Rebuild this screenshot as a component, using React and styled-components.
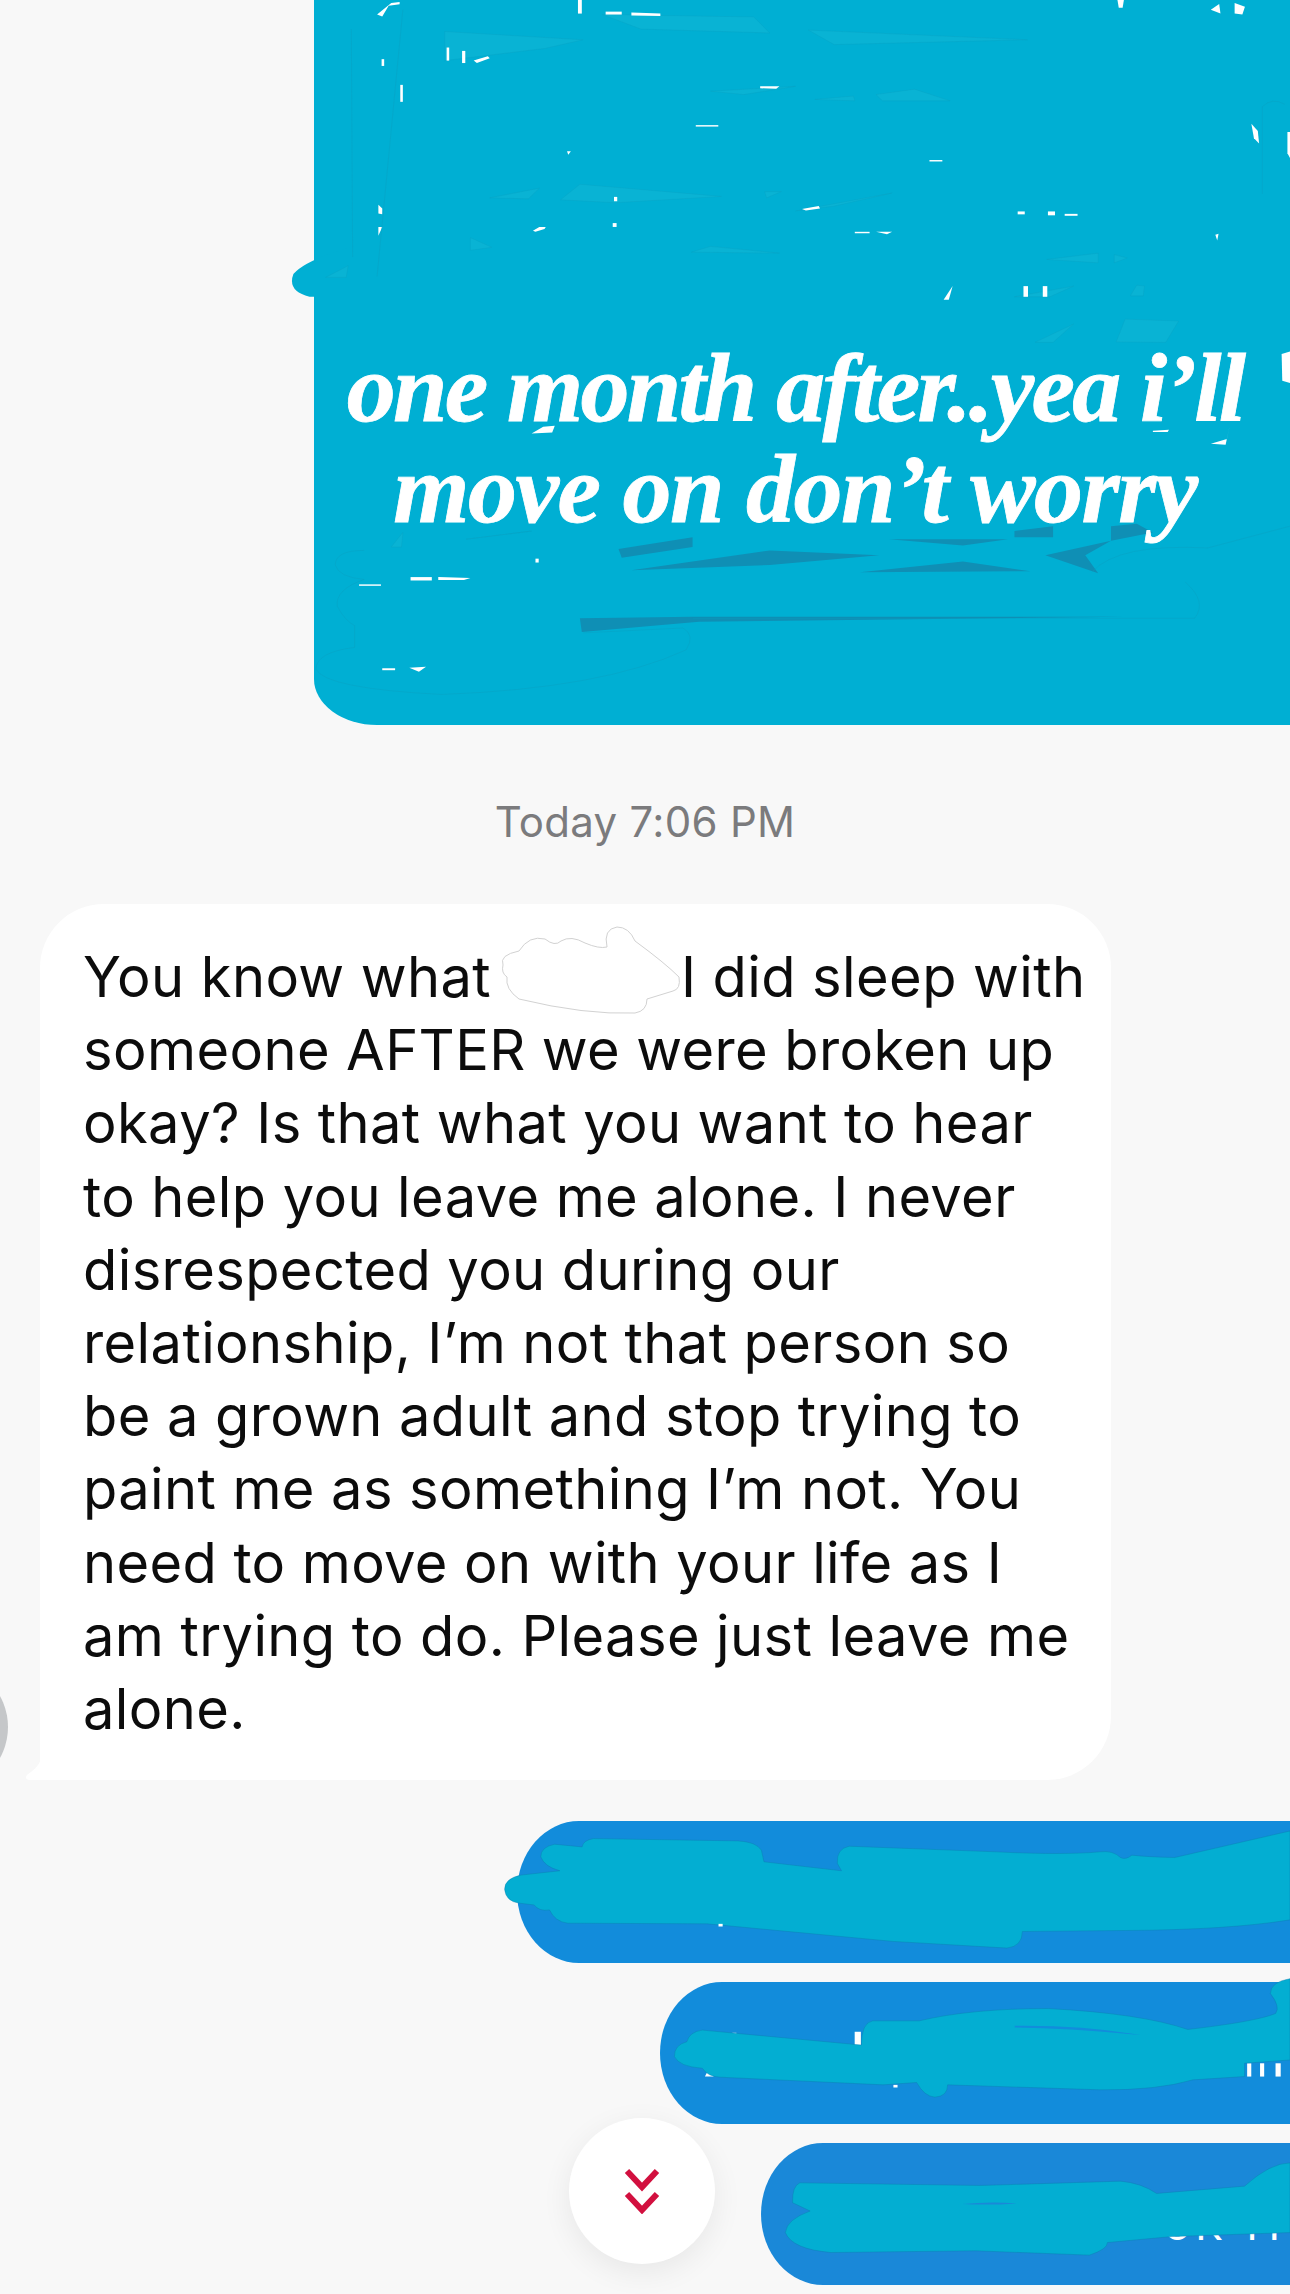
import styled, { createGlobalStyle } from "styled-components";

const GlobalStyle = createGlobalStyle`
  html, body {
    margin: 0;
    padding: 0;
    background: #f8f8f8;
  }
`;

const Page = styled.div`
  position: relative;
  width: 1290px;
  height: 2294px;
  overflow: hidden;
  background: #f8f8f8;
  font-family: Inter, "Liberation Sans", Arial, sans-serif;
`;

const SentCard = styled.div`
  position: relative;
  box-sizing: border-box;
  height: 725px;
  margin-left: 314px;
  padding: 338px 14px 0 0;
  background: #00afd3;
  border-bottom-left-radius: 63px 46px;
  text-align: center;
`;

const Scribble = styled.svg`
  position: absolute;
  left: 0;
  top: 0;
  width: 100%;
  height: 100%;
  overflow: visible;
`;

const CaptionLine = styled.div`
  position: relative;
  font-family: "Liberation Serif", "Times New Roman", serif;
  font-style: italic;
  font-weight: 700;
  font-size: 98px;
  line-height: 101px;
  letter-spacing: ${(p) => p.$spacing}px;
  -webkit-text-stroke: 0.8px #fff;
  color: #fff;
  white-space: nowrap;
`;

const Stamp = styled.div`
  margin-top: 72px;
  font-size: 42px;
  line-height: 50px;
  letter-spacing: 0.3px;
  text-align: center;
  color: #7b7b7d;
`;

const ReceivedRow = styled.div`
  position: relative;
  margin: 57px 0 41px 40px;
  width: 1071px;
`;

const Avatar = styled.div`
  position: absolute;
  left: -160px;
  bottom: -11px;
  width: 128px;
  height: 128px;
  border-radius: 50%;
  background: #c5c7c9;
`;

const Bubble = styled.div`
  position: relative;
  box-sizing: border-box;
  height: 876px;
  padding: 37px 0 0 43px;
  background: #fff;
  border-radius: 64px 64px 64px 0;
  color: #0c0c0c;
  font-size: 56px;
  line-height: 73.2px;
  letter-spacing: 0.4px;

  &::after {
    content: "";
    position: absolute;
    left: -15px;
    bottom: 0;
    width: 16px;
    height: 22px;
    background: #fff;
    clip-path: path("M16 0 C14 9 7 13 2 17 Q-1 21 4 22 L16 22 Z");
  }
`;

const Line = styled.div`
  white-space: nowrap;
`;

const NameGap = styled.span`
  position: relative;
  display: inline-block;
  width: 190px;
  height: 10px;

  svg {
    position: absolute;
    left: 4px;
    top: -60px;
    width: 186px;
    height: 88px;
    overflow: visible;
  }
`;

const SentStack = styled.div`
  display: flex;
  flex-direction: column;
  gap: 19px;
`;

const SentPill = styled.div`
  position: relative;
  box-sizing: border-box;
  height: 142px;
  margin-left: ${(p) => p.$left}px;
  background: ${(p) => p.$color};
  border-radius: 62px 0 0 62px / 71px 0 0 71px;
`;

const Peek = styled.span`
  position: absolute;
  right: 6px;
  bottom: 38px;
  color: #fff;
  font-family: Roboto, sans-serif;
  font-size: 42px;
  line-height: 1;
  letter-spacing: 4px;
  white-space: nowrap;
`;

const JumpButton = styled.div`
  position: absolute;
  left: 569px;
  top: 2118px;
  width: 146px;
  height: 146px;
  display: flex;
  align-items: center;
  justify-content: center;
  background: #fff;
  border-radius: 50%;
  box-shadow: 0 8px 30px rgba(0, 0, 0, 0.07);
`;

const lines = [
  "someone AFTER we were broken up",
  "okay? Is that what you want to hear",
  "to help you leave me alone. I never",
  "disrespected you during our",
  "relationship, I’m not that person so",
  "be a grown adult and stop trying to",
  "paint me as something I’m not. You",
  "need to move on with your life as I",
  "am trying to do. Please just leave me",
  "alone.",
];

// paler slivers left by the marker, in the zoomed crop's box
const slivers = [
  "255,65 470,82 410,100 255,125",
  "500,30 735,35 760,68 560,60",
  "820,62 1160,82 860,92",
  "668,188 800,178 720,195",
  "925,195 985,184 1040,208 935,208",
  "830,205 890,198 892,208",
  "325,408 402,388 385,410",
  "435,412 465,380 685,405 520,418",
  "752,395 778,395 755,408",
  "800,435 950,398 860,425",
  "295,490 328,510 295,516",
  "638,520 668,508 775,522",
  "1190,535 1270,522 1270,542",
  "1295,525 1315,532 1295,542",
  "1140,612 1232,590 1195,612",
  "1172,706 1232,668 1200,706",
  "1298,705 1312,658 1395,662 1375,706",
  "1320,610 1330,588 1342,590 1340,610",
  "70,572 105,548 102,572",
  "172,1128 190,1098 188,1128",
  "288,1112 390,1095 300,1110",
];

// white bits of the text under the marker
const bits = [
  "745,178 775,178 770,183 745,182",
  "150,30 172,6 185,4 185,9 168,12 158,34",
  "462,0 468,0 468,28 462,28",
  "505,24 530,24 530,30 505,30",
  "545,26 590,28 590,33 545,32",
  "1300,0 1310,0 1308,16 1302,16",
  "1445,20 1458,8 1460,28",
  "1482,6 1498,14 1494,30 1482,28",
  "258,98 262,98 262,125 258,125",
  "282,105 287,105 287,130 282,130",
  "300,125 322,116 325,120 305,130",
  "186,175 190,175 190,210 186,210",
  "157,122 161,122 161,136 157,136",
  "152,422 158,430 158,442 152,440",
  "152,468 158,468 152,486",
  "1508,255 1518,270 1520,296 1512,285",
  "1564,272 1568,272 1568,326 1564,316",
  "518,406 523,406 523,415 518,415",
  "810,431 836,425 838,430 816,434",
  "1145,436 1156,436 1156,442 1145,442",
  "1192,436 1203,436 1203,444 1192,444",
  "1218,441 1238,441 1238,445 1218,445",
  "392,476 402,468 412,468 410,472 396,478",
  "516,460 522,460 522,468 516,468",
  "892,478 915,478 915,481 892,481",
  "925,478 950,478 942,483",
  "1030,618 1044,590 1038,618",
  "1154,590 1161,590 1161,612 1154,612",
  "1184,590 1191,590 1191,612 1184,612",
  "1452,484 1457,482 1455,496",
  "445,312 451,312 447,319",
  "645,258 680,258 680,261 645,261",
  "1008,330 1028,330 1028,333 1008,333",
  "1555,730 1568,725 1568,790 1556,785",
  "408,880 426,878 422,892 390,894",
  "1355,888 1380,886 1378,891 1355,891",
  "1445,915 1470,905 1474,880 1468,917",
  "122,1205 156,1205 156,1208 122,1208",
  "202,1190 235,1190 235,1197 202,1197",
  "245,1190 295,1192 285,1196 245,1196",
  "158,1378 178,1378 178,1382 158,1382",
  "200,1377 226,1375 215,1385",
  "396,1152 401,1152 401,1160 396,1160",
];

// darker shadows along the bottom of the card
const shadows = [
  "525,1132 640,1108 640,1128 530,1150",
  "545,1176 760,1135 930,1145 760,1165",
  "900,1180 1060,1158 1165,1178",
  "945,1112 1130,1112 1060,1125",
  "1140,1095 1200,1085 1200,1108 1140,1108",
  "1290,1085 1330,1080 1355,1098 1290,1115",
  "1188,1145 1290,1115 1250,1145 1270,1182",
  "465,1275 640,1272 1310,1272 650,1282 468,1303",
];

const App = () => {
  return (
    <Page>
      <GlobalStyle />

      <SentCard>
        <Scribble viewBox="52 0 1516 1495" preserveAspectRatio="none">
          <path
            d="M110 510 Q40 535 20 565 Q10 600 45 612 L110 612 Z"
            fill="#00afd3"
          />
          {slivers.map((pts, i) => (
            <polygon key={i} points={pts} fill="#09b3d4" stroke="#0a9dbf" strokeWidth="0.5" />
          ))}
          {bits.map((pts, i) => (
            <polygon key={i} points={pts} fill="#fff" />
          ))}
          {shadows.map((pts, i) => (
            <polygon key={i} points={pts} fill="#0f8fb5" />
          ))}
          <g fill="none" stroke="#0a9dbf" strokeWidth="0.7">
            <path d="M110 60 L112 530 M190 20 L150 570 M1525 220 Q1540 200 1560 215 M1525 220 L1525 400" />
            <path d="M130 1135 Q85 1135 85 1165 Q90 1190 130 1195 Q85 1215 88 1250 Q100 1280 115 1290 L115 1335 Q55 1345 55 1380 Q70 1420 250 1432 Q500 1420 630 1340 Q645 1310 625 1295 L470 1305" />
            <path d="M1260 1180 Q1300 1120 1440 1130 L1568 1085 M1405 1200 Q1440 1240 1420 1275 L640 1275" />
          </g>
        </Scribble>
        <CaptionLine $spacing={-2.8}>one month after..yea i’ll</CaptionLine>
        <CaptionLine $spacing={-1.5}>move on don’t worry</CaptionLine>
      </SentCard>

      <Stamp>Today 7:06 PM</Stamp>

      <ReceivedRow>
        <Avatar />
        <Bubble>
          <Line>
            You know what
            <NameGap>
              <svg viewBox="0 0 186 88">
                <path
                  d="M8 38 Q4 28 24 24 Q34 8 50 12 Q60 20 66 14 Q76 8 90 16 Q104 22 112 20 Q108 2 122 0 Q134 0 140 14 Q170 36 184 50 Q186 62 178 64 L152 72 Q152 84 140 86 Q90 88 24 72 Q10 62 12 50 Q6 46 8 38 Z"
                  fill="#fff"
                  stroke="#d2d2d2"
                  strokeWidth="1"
                />
              </svg>
            </NameGap>
            I did sleep with
          </Line>
          {lines.map((text, i) => (
            <Line key={i}>{text}</Line>
          ))}
        </Bubble>
      </ReceivedRow>

      <SentStack>
        <SentPill $left={517} $color="#128cdb">
          <Scribble viewBox="72 62 1496 428" preserveAspectRatio="none">
            <path
              d="M1568 92 L1345 172 Q1290 170 1262 165 Q1250 180 1240 172 Q1225 150 1200 155 Q1130 165 1000 155 L715 138 Q690 145 692 190 L700 212 L550 185 L545 150 Q535 125 500 122 L220 115 Q200 120 198 140 L145 132 Q118 140 118 170 Q125 200 155 212 L80 225 Q48 235 48 268 Q50 305 78 310 L105 315 Q115 335 135 330 Q145 365 170 370 L440 372 L800 425 L1020 445 Q1050 440 1050 395 L1250 392 Q1450 390 1568 360 Z"
              fill="#03aed2"
              stroke="#0c7fb0"
              strokeWidth="1"
            />
            <rect x="462" y="372" width="8" height="8" fill="#fff" />
          </Scribble>
        </SentPill>

        <SentPill $left={660} $color="#128cdb">
          <Scribble viewBox="348 545 1220 428" preserveAspectRatio="none">
            <g fill="#fff">
              <rect x="725" y="695" width="12" height="45" />
              <rect x="488" y="698" width="8" height="20" />
              <polygon points="435,830 445,800 452,830" />
              <rect x="800" y="855" width="8" height="8" />
              <rect x="1485" y="790" width="8" height="40" />
              <rect x="1510" y="790" width="8" height="40" />
              <rect x="1540" y="790" width="10" height="40" />
            </g>
            <path
              d="M1568 535 Q1530 545 1530 580 Q1550 620 1540 640 Q1500 665 1370 688 Q1280 640 1100 625 Q950 625 850 662 L760 662 Q738 668 738 735 L430 690 Q405 695 400 725 Q375 735 376 770 Q385 800 430 805 Q440 830 465 832 L780 855 L845 848 Q860 890 880 892 Q905 890 905 855 L1200 870 Q1310 872 1380 840 L1480 830 L1480 790 L1568 780 Z"
              fill="#03aed2"
              stroke="#0c7fb0"
              strokeWidth="1"
            />
            <path d="M1035 677 Q1170 675 1278 705 Q1150 685 1035 682 Z" fill="#128cdb" />
          </Scribble>
        </SentPill>

        <SentPill $left={761} $color="#1a88d8">
          <Peek>OK TI</Peek>
          <Scribble viewBox="545 1030 1023 428" preserveAspectRatio="none">
            <path
              d="M1568 1090 Q1530 1090 1480 1160 L1310 1182 Q1280 1150 1240 1145 L970 1158 L620 1150 Q605 1160 606 1210 L640 1235 Q595 1260 592 1300 Q605 1350 680 1360 L960 1355 L1180 1368 Q1215 1350 1215 1330 L1340 1312 L1568 1300 Z"
              fill="#03aed2"
              stroke="#0c7fb0"
              strokeWidth="1"
            />
            <path d="M935 1214 Q985 1206 1040 1212 Q985 1218 935 1214 Z" fill="#1a88d8" />
          </Scribble>
        </SentPill>
      </SentStack>

      <JumpButton>
        <svg width="36" height="46" viewBox="0 0 36 46" fill="none" stroke="#d2103f" strokeWidth="6">
          <path d="M3 3 L18 19 L33 3" />
          <path d="M3 26 L18 42 L33 26" />
        </svg>
      </JumpButton>
    </Page>
  );
};

export default App;
